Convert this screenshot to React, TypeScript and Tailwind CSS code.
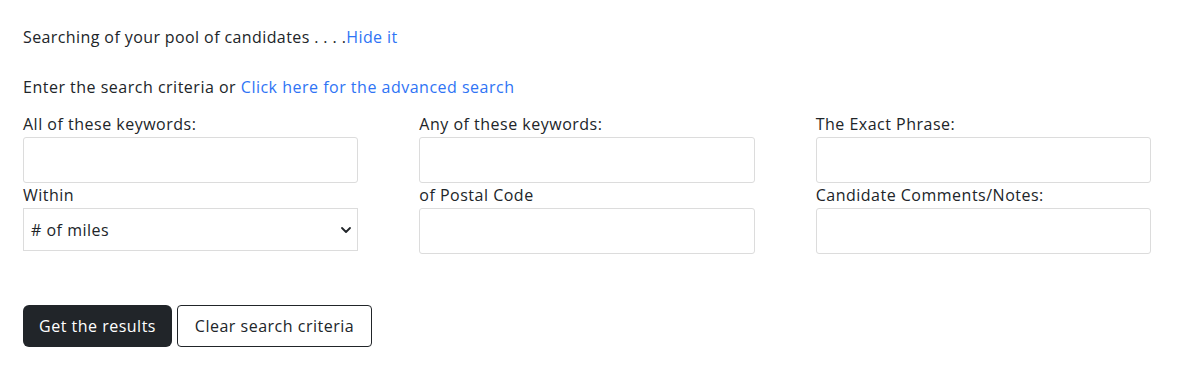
import { ChevronDown } from "lucide-react";

const font = { fontFamily: '"Open Sans", "Liberation Sans", sans-serif' };

function Field({ label }: { label: string }) {
  return (
    <div className="flex flex-col">
      <label className="mb-px h-6 leading-6">{label}</label>
      <input
        type="text"
        className="h-[46px] w-full rounded-[3px] border border-[#dcdcdc] bg-white px-3 outline-none"
      />
    </div>
  );
}

export default function App() {
  return (
    <div
      className="h-[375px] w-[1180px] bg-white text-[16px] tracking-[0.5px] text-[#212529]"
      style={font}
    >
      <div className="pl-[23px] pr-[29px] pt-[25px]">
        <p className="leading-6 tracking-[0.4px]">
          Searching of your pool of candidates . . . .
          <a href="#" className="text-[#2f74f5]">
            Hide it
          </a>
        </p>

        <p className="mt-[26px] leading-6">
          Enter the search criteria or{" "}
          <a href="#" className="text-[#2f74f5]">
            Click here for the advanced search
          </a>
        </p>

        <div className="mt-[13px] grid grid-cols-3 gap-x-[61px]">
          <Field label="All of these keywords:" />
          <Field label="Any of these keywords:" />
          <Field label="The Exact Phrase:" />

          <div className="flex flex-col">
            <label className="mb-px h-6 leading-6">Within</label>
            <div className="h-[43px] border border-[#dcdcdc] bg-white">
              <div className="flex h-full items-center justify-between pl-[7px] pr-[3px]">
                <span># of miles</span>
                <ChevronDown size={16} strokeWidth={2.75} className="text-[#212529]" />
              </div>
            </div>
          </div>
          <Field label="of Postal Code" />
          <Field label="Candidate Comments/Notes:" />
        </div>

        <div className="mt-[51px] flex gap-[5px]">
          <button className="h-[42px] w-[149px] rounded-[6px] bg-[#212529] font-medium text-white">
            Get the results
          </button>
          <button className="h-[42px] w-[195px] rounded-[4px] border border-[#212529] bg-white text-[#212529]">
            Clear search criteria
          </button>
        </div>
      </div>
    </div>
  );
}
